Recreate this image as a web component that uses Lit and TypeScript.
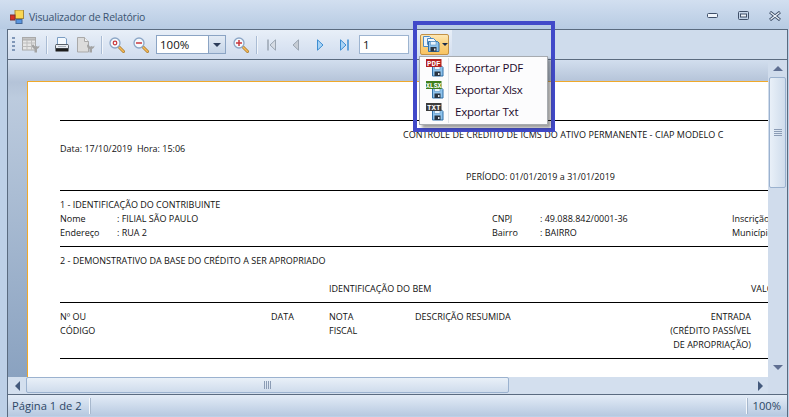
import { LitElement, html, css, svg } from "lit";
import { customElement } from "lit/decorators.js";

const floppy = (x: number, y: number) => svg`
  <g transform="translate(${x} ${y})">
    <path d="M.5.5h9l1.500 1.500v8.500h-10.500z" fill="#8fc3ec" stroke="#2f6fa8"/>
    <rect x="2.500" y=".5" width="5.500" height="3.500" fill="#eaf4fc" stroke="#5b93c3" stroke-width=".6"/>
    <rect x="2.500" y="6" width="6" height="4.500" fill="#2a3440"/>
    <rect x="6" y="7.500" width="1.500" height="2" fill="#dfe6ee"/>
  </g>`;

const exportIcon = (label: string, bg: string, size: string) => html`<svg class="mi" width="18" height="18" viewBox="0 0 18 18">
  ${floppy(6, 6.5)}
  <rect x="0" y="0" width="15.500" height="8" fill="${bg}"/>
  <text x="7.700" y="6.500" text-anchor="middle" class="mt ${size}">${label}</text>
</svg>`;

const wrench = svg`<path d="M10 8.500c0 2 1 3 2.500 3.500V15.500h2.500V12c1.500-.5 2.500-1.500 2.500-3.500L16 9.700l-1.500-.7-1.500.7L11.500 7.500C10.500 7.500 10 8 10 8.500z" fill="#a3a3a3"/>`;

const icons = {
  setupTable: html`<svg width="18" height="16" viewBox="0 0 18 16"><rect x=".5" y=".5" width="13" height="12.500" fill="#e6e6e6" stroke="#a9a9a9"/><rect x=".5" y=".5" width="13" height="2.500" fill="#c4c4c4" stroke="#a9a9a9"/><path d="M.5 6h13M.5 9.500h13M5 3v10M9.500 3v10" stroke="#bdbdbd" fill="none"/>${wrench}</svg>`,
  print: html`<svg width="14" height="16" viewBox="0 0 14 16"><path d="M2.500.5h7.500l1.500 1.500V7.500h-9z" fill="#f4f9fe" stroke="#7b9dc2"/><path d="M1 7.500h12l.5 1v3H.5v-3z" fill="#e9edf2" stroke="#596069"/><rect x=".5" y="11.500" width="13" height="3" rx=".5" fill="#1d1d1d"/><rect x="3" y="9" width="8" height="1" fill="#aab2bc"/></svg>`,
  pageSetup: html`<svg width="18" height="16" viewBox="0 0 18 16"><path d="M.5.5h7l4 4V15H.5z" fill="#dcdcdc" stroke="#a9a9a9"/><path d="M7.500.5v4h4" fill="#f2f2f2" stroke="#a9a9a9"/>${wrench}</svg>`,
  zoomBase: (glyph: unknown) => html`<svg width="16" height="16" viewBox="0 0 16 16"><path d="M9.800 9.800l4.700 4.700" stroke="#a87a30" stroke-width="3" stroke-linecap="round"/><path d="M10 10l4.500 4.500" stroke="#f6bb58" stroke-width="1.600" stroke-linecap="round"/><circle cx="6" cy="6" r="5" fill="#f5f9fd" stroke="#8ba6c6" stroke-width="1.300"/>${glyph}</svg>`,
  first: html`<svg width="10" height="12" viewBox="0 0 10 12"><path d="M1 .5v11" stroke="#9aa5b2" stroke-width="1.500"/><path d="M8.500.8v10.400L3 6z" fill="#d5dbe3" stroke="#9aa5b2"/></svg>`,
  prev: html`<svg width="8" height="12" viewBox="0 0 8 12"><path d="M6.500.8v10.400L1 6z" fill="#c6ccd4" stroke="#9aa5b2"/></svg>`,
  next: html`<svg width="8" height="12" viewBox="0 0 8 12"><path d="M1.500.8v10.400L7 6z" fill="#a9d3f5" stroke="#3d8ed2"/></svg>`,
  last: html`<svg width="10" height="12" viewBox="0 0 10 12"><path d="M1.500.8v10.400L7 6z" fill="#a9d3f5" stroke="#3d8ed2"/><path d="M9 .5v11" stroke="#3d8ed2" stroke-width="1.500"/></svg>`,
};

@customElement("app-root")
export class AppRoot extends LitElement {
  static styles = css`
    :host { display: block; width: 789px; height: 417px; overflow: hidden; position: relative;
      font-family: "Open Sans", "Noto Sans", sans-serif; background: #bdd0e7; }
    .win { height: 417px; display: flex; flex-direction: column; }
    .title { height: 29px; flex: none; display: flex; align-items: center; padding: 4px 8px 0 10px; box-sizing: border-box;
      background: linear-gradient(#d2dff0, #b7cbe3); color: #3b5472; font-size: 10.5px; letter-spacing: -.2px; }
    .title .txt { margin-left: 5px; flex: 1; }
    .wbtns { display: flex; gap: 20px; align-items: center; margin-top: -1px; }
    .client { flex: 1; margin: 0 1px 0 7px; border: 1px solid #5a6b80; border-bottom: 0; display: flex; flex-direction: column; min-height: 0; }
    .tools { height: 29px; flex: none; display: flex; background: #cfdcec; border-bottom: 1px solid #5b6b7f; }
    .strip { width: 444px; height: 29px; display: flex; align-items: center; padding-left: 4px; box-sizing: border-box;
      background: linear-gradient(#e8eff8, #d0dcee); }
    .grip { width: 3px; height: 15px; flex: none; background: repeating-linear-gradient(#8097b8 0 2px, transparent 2px 4px); }
    .btn { width: 24px; height: 22px; flex: none; display: flex; align-items: center; justify-content: center; }
    .btn.first { margin-left: 4px; }
    .sep { width: 1px; height: 18px; margin: 0 3px; flex: none; background: #aabcd4; box-shadow: 1px 0 #f2f6fb; }
    .combo { width: 70px; height: 19px; margin-left: 3px; margin-right: 3px; flex: none; display: flex; box-sizing: border-box;
      border: 1px solid #8ba4c4; background: #fff; font-size: 11.500px; line-height: 17px; color: #111; }
    .combo .v { flex: 1; padding-left: 3px; }
    .combo .dd { width: 16px; border-left: 1px solid #8ba4c4; background: linear-gradient(#e3ebf5, #c6d5e8); display: flex; align-items: center; justify-content: center; }
    .arrow { width: 0; height: 0; border: 4px solid transparent; border-top-color: #2c3d5a; border-bottom: 0; }
    .num { width: 50px; height: 19px; margin-left: 3px; flex: none; box-sizing: border-box; border: 1px solid #9db4d0; background: #fff;
      font-size: 11.500px; line-height: 17px; padding-left: 3px; color: #111; }
    .export { width: 29px; height: 21px; margin-left: 11px; flex: none; box-sizing: border-box; border: 1px solid #c29147; border-radius: 2px;
      background: linear-gradient(#fde7b4, #fbd27f 45%, #f9c463); display: flex; align-items: center; padding-left: 2px; gap: 1px; }
    .export .arrow { border-width: 3px; border-bottom: 0; border-top-color: #1b2b4a; }
    .viewer { flex: 1; display: flex; flex-direction: column; min-height: 0; }
    .main { height: 317px; flex: none; display: flex; }
    .canvas { flex: 1; min-width: 0; overflow: hidden;
      background: linear-gradient(#d2deee, #b4c3d8 7%, #bccbde 12%, #8aa2c0); }
    .page { margin: 21px 0 0 19px; height: 296px; box-sizing: border-box; background: #fff; overflow: hidden; border-top: 1px solid #f0a92a; border-left: 1px solid #f0a92a;
      padding: 38px 0 0 32px; color: #111; font-size: 9px; line-height: 14px; white-space: nowrap; }
    .line { height: 1px; background: #000; }
    .gap6 { margin-top: 6px; }
    .r { height: 14px; display: grid; line-height: 16px; }
    .ctl { grid-template-columns: 343px auto; letter-spacing: .05px; }
    .per { grid-template-columns: 406px auto; }
    .party { grid-template-columns: 57px 375px 48px 192px auto; }
    .sp { height: 14px; }
    .l6 { margin-top: 7px; }
    .idb { grid-template-columns: 269px 422px auto; }
    .hd { grid-template-columns: 211px 58px 86px 200px 136px; }
    .right { text-align: right; }
    .vs { width: 19px; flex: none; background: #d0dcec; position: relative; display: flex; flex-direction: column; align-items: center; }
    .vs .end { height: 17px; flex: none; display: flex; align-items: center; justify-content: center; }
    .up { width: 0; height: 0; border: 5px solid transparent; border-bottom-color: #5f6f92; border-top: 0; }
    .dn { width: 0; height: 0; border: 5px solid transparent; border-top-color: #5f6f92; border-bottom: 0; margin-bottom: 2px; }
    .vthumb { width: 17px; height: 111px; box-sizing: border-box; border: 1px solid #9bb2cf; border-radius: 2px; background: linear-gradient(90deg, #e9f0f8, #cfdcec);
      display: flex; align-items: center; justify-content: center; }
    .vs .fill { flex: 1; }
    .gripv { width: 8px; height: 7px; background: repeating-linear-gradient(#8b9cb5 0 1px, transparent 1px 2px); }
    .hs { height: 17px; flex: none; display: flex; background: #d3dfee; border-bottom: 0; }
    .hs .end { width: 18px; flex: none; display: flex; align-items: center; justify-content: center; }
    .lf { width: 0; height: 0; border: 5px solid transparent; border-right-color: #445a7c; border-left: 0; }
    .rt { width: 0; height: 0; border: 5px solid transparent; border-left-color: #445a7c; border-right: 0; margin-left: 3px; }
    .hthumb { width: 483px; height: 16px; box-sizing: border-box; border: 1px solid #9bb2cf; border-radius: 2px; background: linear-gradient(#e9f0f8, #cfdcec);
      display: flex; align-items: center; justify-content: center; }
    .griph { width: 7px; height: 8px; background: repeating-linear-gradient(90deg, #8b9cb5 0 1px, transparent 1px 2px); }
    .hs .fill { flex: 1; }
    .hs .corner { width: 19px; flex: none; background: #d0dcec; }
    .status { height: 22px; flex: none; border-top: 1px solid #5a6b80; display: flex; align-items: center; box-sizing: border-box;
      background: linear-gradient(#e3ecf7, #b7c9e0); font-size: 11.200px; color: #2c4766; padding: 0 6px 0 4px; }
    .status .sdiv { width: 1px; height: 16px; background: #f4f7fb; box-shadow: 1px 0 #a7b8cd; }
    .status .p { width: 77px; }
    .status .fill { flex: 1; }
    .status .z { margin-left: 6px; }
    .hl { position: absolute; left: 413px; top: 21px; width: 142px; height: 111px; box-sizing: border-box; border: 4px solid #4149c9; pointer-events: none; }
    .menu { position: absolute; left: 419px; top: 56px; width: 129px; height: 69px; box-sizing: border-box; background: #fcfcfd; border: 1px solid #a7abb0;
      box-shadow: 3px 3px 3px rgba(60,60,60,.5); padding: 0 1px; display: flex; flex-direction: column; }
    .mitem { height: 22px; flex: none; display: flex; align-items: center; font-size: 11.500px; letter-spacing: -.2px; color: #1c0b2c; }
    .mi { margin-left: 5px; flex: none; }
    .mitem span { margin: -2px 0 0 11px; }
    .mline { position: absolute; left: 28px; top: 1px; bottom: 1px; width: 1px; background: #dfe3e8; }
    .mt { font: bold 7.500px "Liberation Mono", monospace; fill: #fff; letter-spacing: 0; }
    .mt.s4 { font-size: 6.500px; }
  `;

  render() {
    return html`<div class="win">
      <div class="title">
        <svg width="14" height="14" viewBox="0 0 14 14"><rect x="5" y="0" width="8.500" height="8.500" fill="#f9d652" stroke="#a5873a"/><rect x="0" y="5" width="5" height="5" fill="#d93025" stroke="#7d3030"/><rect x="6" y="9.500" width="6" height="4" fill="#5a96e0" stroke="#44699a"/></svg>
        <span class="txt">Visualizador de Relatório</span>
        <div class="wbtns">
          <svg width="11" height="6" viewBox="0 0 11 6"><rect x=".5" y=".5" width="10" height="4" rx="1" fill="#f0f5fb" stroke="#3f4f68"/></svg>
          <svg width="11" height="10" viewBox="0 0 11 10"><rect x=".5" y=".5" width="10" height="8" rx="1" fill="none" stroke="#3f4f68"/><rect x="2.500" y="3" width="6" height="3" fill="#eef3fa" stroke="#3f4f68"/></svg>
          <svg width="12" height="10" viewBox="0 0 12 10"><path d="M1 1l10 8M11 1L1 9" stroke="#3f4f68" stroke-width="3"/><path d="M1.500 1.500l9 7M10.500 1.500l-9 7" stroke="#eef3fa" stroke-width="1.200"/></svg>
        </div>
      </div>
      <div class="client">
        <div class="tools">
          <div class="strip">
            <div class="grip"></div>
            <div class="btn first">${icons.setupTable}</div>
            <div class="sep"></div>
            <div class="btn">${icons.print}</div>
            <div class="btn">${icons.pageSetup}</div>
            <div class="sep"></div>
            <div class="btn">${icons.zoomBase(svg`<circle cx="6" cy="6" r="1.800" fill="none" stroke="#c8383c" stroke-width="1.200"/>`)}</div>
            <div class="btn">${icons.zoomBase(svg`<path d="M3 6h6" stroke="#c8383c" stroke-width="1.500"/>`)}</div>
            <div class="combo"><div class="v">100%</div><div class="dd"><div class="arrow"></div></div></div>
            <div class="btn">${icons.zoomBase(svg`<path d="M3 6h6M6 3v6" stroke="#c8383c" stroke-width="1.500"/>`)}</div>
            <div class="sep"></div>
            <div class="btn">${icons.first}</div>
            <div class="btn">${icons.prev}</div>
            <div class="btn">${icons.next}</div>
            <div class="btn">${icons.last}</div>
            <div class="num">1</div>
            <div class="export">
              <svg width="18" height="17" viewBox="0 0 18 17"><path d="M.5.5h6l3 3v7h-9z" fill="#eaf4fd" stroke="#4d8bc4"/><path d="M4.500 2.500h6l3 3v3h-9z" fill="#f5fafe" stroke="#4d8bc4"/>${floppy(5, 5)}</svg>
              <div class="arrow"></div>
            </div>
          </div>
        </div>
        <div class="viewer">
          <div class="main">
            <div class="canvas">
              <div class="page">
                <div class="line"></div>
                <div class="r ctl gap6"><span></span><span>CONTROLE DE CRÉDITO DE ICMS DO ATIVO PERMANENTE - CIAP MODELO C</span></div>
                <div class="r"><span>Data: 17/10/2019 &nbsp;Hora: 15:06</span></div>
                <div class="sp"></div>
                <div class="r per"><span></span><span>PERÍODO: 01/01/2019 a 31/01/2019</span></div>
                <div class="line l6"></div>
                <div class="r gap6"><span>1 - IDENTIFICAÇÃO DO CONTRIBUINTE</span></div>
                <div class="r party"><span>Nome</span><span>: FILIAL SÃO PAULO</span><span>CNPJ</span><span>: 49.088.842/0001-36</span><span>Inscrição</span></div>
                <div class="r party"><span>Endereço</span><span>: RUA 2</span><span>Bairro</span><span>: BAIRRO</span><span>Município</span></div>
                <div class="line l6"></div>
                <div class="r gap6"><span>2 - DEMONSTRATIVO DA BASE DO CRÉDITO A SER APROPRIADO</span></div>
                <div class="sp"></div>
                <div class="r idb"><span></span><span>IDENTIFICAÇÃO DO BEM</span><span>VALOR</span></div>
                <div class="line l6"></div>
                <div class="r hd gap6"><span>Nº OU</span><span>DATA</span><span>NOTA</span><span>DESCRIÇÃO RESUMIDA</span><span class="right">ENTRADA</span></div>
                <div class="r hd"><span>CÓDIGO</span><span></span><span>FISCAL</span><span></span><span class="right">(CRÉDITO PASSÍVEL</span></div>
                <div class="r hd"><span></span><span></span><span></span><span></span><span class="right">DE APROPRIAÇÃO)</span></div>
                <div class="line l6"></div>
              </div>
            </div>
            <div class="vs">
              <div class="end"><div class="up"></div></div>
              <div class="vthumb"><div class="gripv"></div></div>
              <div class="fill"></div>
              <div class="end"><div class="dn"></div></div>
            </div>
          </div>
          <div class="hs">
            <div class="end"><div class="lf"></div></div>
            <div class="hthumb"><div class="griph"></div></div>
            <div class="fill"></div>
            <div class="end"><div class="rt"></div></div>
            <div class="corner"></div>
          </div>
          <div class="status">
            <span class="p">Página 1 de 2</span><div class="sdiv"></div>
            <div class="fill"></div>
            <div class="sdiv"></div><span class="z">100%</span>
          </div>
        </div>
      </div>
      <div class="hl"></div>
      <div class="menu">
        <div class="mline"></div>
        <div class="mitem">${exportIcon("PDF", "#b3201f", "")}<span>Exportar PDF</span></div>
        <div class="mitem">${exportIcon("XLSX", "#3f7f1c", "s4")}<span>Exportar Xlsx</span></div>
        <div class="mitem">${exportIcon("TXT", "#3c3c3c", "")}<span>Exportar Txt</span></div>
      </div>
    </div>`;
  }
}
